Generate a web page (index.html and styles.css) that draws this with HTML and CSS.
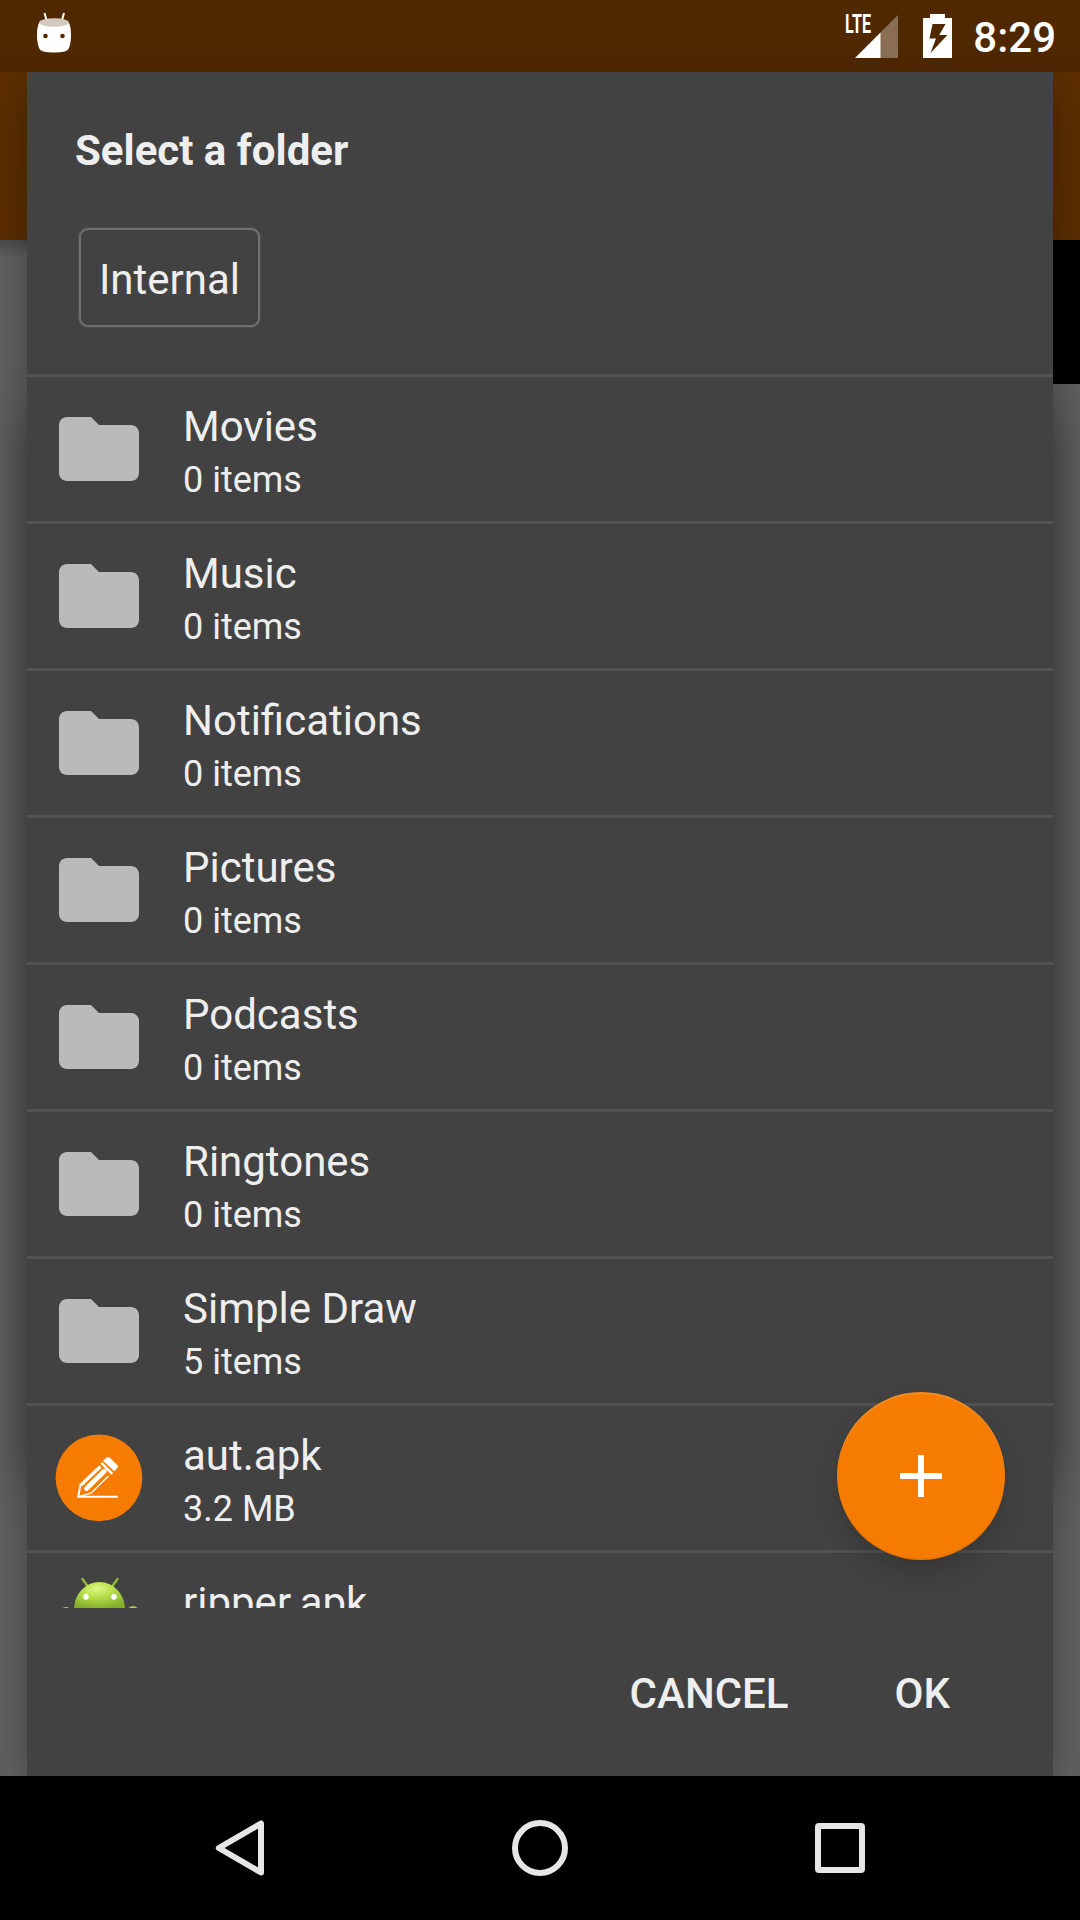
FILE: index.html
```html
<!DOCTYPE html>
<html lang="en">
<head>
<meta charset="utf-8">
<title>Select a folder</title>
<link rel="stylesheet" href="styles.css">
</head>
<body>
<svg width="0" height="0" class="defs">
  <symbol id="folder" viewBox="0 0 24 24"><path d="M10 4H4c-1.100 0-2 .9-2 2v12c0 1.100.9 2 2 2h16c1.100 0 2-.9 2-2V8c0-1.100-.9-2-2-2h-8z"/></symbol>
</svg>
<div class="screen">
  <header class="status">
    <svg class="robot" width="36" height="42" viewBox="0 0 36 42">
      <path d="M8.500 1l2.500 9M28 1l-2.500 9" stroke="#fff" stroke-width="2" fill="none"/>
      <path d="M3 11Q1 15 1 23t2 13q1 4.500 15 4.500t15-4.500q2-5 2-13t-2-12z" fill="#fff"/>
      <ellipse cx="18" cy="10.500" rx="15" ry="4.200" fill="#d3c9bf"/>
      <circle cx="9.500" cy="24" r="2.300" fill="#4f2800"/><circle cx="26.500" cy="24" r="2.300" fill="#4f2800"/>
    </svg>
    <div class="indicators">
      <div class="signal">
        <span class="lte">LTE</span>
        <svg width="43" height="43" viewBox="0 0 43 43"><path d="M43 0v43H25V18z" fill="#fff" opacity=".33"/><path d="M25.500 17.500V43H0z" fill="#fff"/></svg>
      </div>
      <svg class="battery" width="29" height="44" viewBox="0 0 29 44"><path fill="#fff" fill-rule="evenodd" d="M7 0h15v4h7v40H0V4h7zM9.500 10L6.500 24.500h6.500L7.500 39 24.500 21h-8.200L22.500 10z"/></svg>
      <span class="clock">8:29</span>
    </div>
  </header>
  <main class="backdrop">
    <section class="dialog">
      <h1 class="title">Select a folder</h1>
      <div class="crumbs"><span class="crumb">Internal</span></div>
      <div class="list-wrap">
        <ul class="list">
          <li><svg class="icon"><use href="#folder"/></svg><div class="text"><b>Movies</b><small>0 items</small></div></li>
          <li><svg class="icon"><use href="#folder"/></svg><div class="text"><b>Music</b><small>0 items</small></div></li>
          <li><svg class="icon"><use href="#folder"/></svg><div class="text"><b>Notifications</b><small>0 items</small></div></li>
          <li><svg class="icon"><use href="#folder"/></svg><div class="text"><b>Pictures</b><small>0 items</small></div></li>
          <li><svg class="icon"><use href="#folder"/></svg><div class="text"><b>Podcasts</b><small>0 items</small></div></li>
          <li><svg class="icon"><use href="#folder"/></svg><div class="text"><b>Ringtones</b><small>0 items</small></div></li>
          <li><svg class="icon"><use href="#folder"/></svg><div class="text"><b>Simple Draw</b><small>5 items</small></div></li>
          <li>
            <svg class="icon" viewBox="0 0 96 96">
              <circle cx="48" cy="47.800" r="43.400" fill="#f57c00"/>
              <path d="M55.800 27.500q1.500-1 3 .3l7.500 7.200q1.300 1.500.2 3L63.300 41.300 52 30.800z" fill="#fff"/>
              <g fill="none" stroke="#fff">
                <path d="M50.300 32.800L61.300 43.800" stroke-width="2.400"/>
                <path d="M49.500 36.500L30 55" stroke-width="3.200"/>
                <path d="M29.500 54L27.300 66.700" stroke-width="2"/>
                <path d="M53.200 41.300L35.500 58.500" stroke-width="5" stroke-linecap="round"/>
                <path d="M57.500 46L40 63.200 28 66.500" stroke-width="1.500"/>
                <path d="M26.300 66.800H66.800" stroke-width="2"/>
              </g>
            </svg>
            <div class="text"><b>aut.apk</b><small>3.2 MB</small></div>
          </li>
          <li>
            <svg class="icon" viewBox="0 0 96 96">
              <defs><radialGradient id="droid" cx=".45" cy=".25" r=".75"><stop offset="0" stop-color="#e0f986"/><stop offset=".4" stop-color="#b8df4b"/><stop offset="1" stop-color="#83ad2b"/></radialGradient></defs>
              <path d="M31.500 2l5 7M66.500 2l-5 7" stroke="#91b83a" stroke-width="2.500" stroke-linecap="round"/>
              <path d="M23 32a25.500 27 0 0 1 51 0z" fill="url(#droid)"/>
              <ellipse cx="35" cy="19.700" rx="2.700" ry="3" fill="#fff"/><ellipse cx="63" cy="19.700" rx="2.700" ry="3" fill="#fff"/>
              <circle cx="15" cy="36" r="6" fill="#a8cf3f"/><circle cx="82" cy="35" r="6" fill="#a8cf3f"/>
            </svg>
            <div class="text"><b>ripper.apk</b></div>
          </li>
        </ul>
        <button class="fab"><svg width="42" height="42" viewBox="0 0 42 42"><path d="M18 0h6v18h18v6H24v18h-6V24H0v-6h18z" fill="#fff"/></svg></button>
      </div>
      <div class="actions"><span>CANCEL</span><span>OK</span></div>
    </section>
  </main>
  <nav class="nav">
    <svg viewBox="0 0 60 60"><path d="M51 5.500v49L8.800 30z"/></svg>
    <svg viewBox="0 0 60 60"><circle cx="30" cy="30" r="25"/></svg>
    <svg viewBox="0 0 60 60"><rect x="8" y="8" width="44" height="44" rx="1"/></svg>
  </nav>
</div>
</body>
</html>
```
FILE: styles.css
```css
* { box-sizing: border-box; }
body { margin: 0; background: #000; font-family: Roboto, sans-serif; color: #eee; }
.defs { display: block; height: 0; }
.screen { width: 1080px; height: 1920px; display: flex; flex-direction: column; overflow: hidden; }
.status { height: 72px; flex: none; background: linear-gradient(#502800 45px, #4a2500); display: flex; justify-content: space-between; align-items: flex-start; padding: 12px 24px 0 36px; }
.indicators { display: flex; color: #fff; }
.signal { position: relative; width: 54px; padding: 3px 0 0 11px; margin-right: 25px; }
.signal svg { display: block; }
.lte { position: absolute; left: 1px; top: 0; font: 700 26px/25px Roboto, sans-serif; transform: scaleX(.62); transform-origin: 0 0; }
.battery { margin-top: 2px; }
.clock { font-size: 42px; font-weight: 500; line-height: 52px; margin-left: 21px; }
.backdrop {
  height: 1704px; flex: none; padding: 0 27px;
  background:
    linear-gradient(#000, #000) right 0 top 168px / 27px 144px no-repeat,
    linear-gradient(#5f3000, #5c2e00) 0 0 / 100% 168px no-repeat,
    linear-gradient(rgba(0,0,0,.22), transparent) 0 168px / 100% 18px no-repeat,
    #626262;
  overflow: hidden;
  isolation: isolate;
}
.dialog { position: relative; height: 100%; background: #424242; box-shadow: 0 10px 42px rgba(0,0,0,.34); display: flex; flex-direction: column; }
/* softer second shadow of the panel stacked beneath the dialog */
.dialog::before { content: ""; position: absolute; z-index: -1; inset: 345px 0 296px; box-shadow: 0 0 48px rgba(0,0,0,.34); }
.title { margin: 0; padding: 54px 48px 0; font-size: 42px; line-height: 50px; font-weight: 700; }
.crumbs { height: 198px; padding: 52px 52px 0; }
.crumb { display: inline-block; width: 181px; height: 99px; border: 2px solid #707070; border-radius: 9px; box-shadow: 0 0 2px #707070; font-size: 42px; line-height: 99px; text-align: center; }
.list-wrap { position: relative; height: 1234px; }
.list { list-style: none; margin: 0; padding: 0; height: 100%; overflow: hidden; }
.list li { height: 147px; border-top: 3px solid #525252; padding: 24px 0 0 24px; display: flex; align-items: flex-start; }
.icon { width: 96px; height: 96px; fill: #bababa; flex: none; }
.text { margin: -2px 0 0 36px; }
.text b { display: block; font-weight: 400; font-size: 42px; line-height: 56px; }
.text small { display: block; font-size: 36px; line-height: 50px; }
.fab { position: absolute; right: 48px; top: 1018px; width: 168px; height: 168px; border: 0; border-radius: 50%; padding: 0; background: #f57c00; display: grid; place-items: center; box-shadow: 0 14px 24px rgba(0,0,0,.17), inset 0 2px 1px rgba(255,255,255,.12), inset 0 -2px 1px rgba(0,0,0,.06); }
.actions { display: flex; justify-content: flex-end; gap: 106px; padding: 61px 103px 0 0; font-size: 42px; font-weight: 500; line-height: 50px; }
.nav { height: 144px; flex: none; background: #000; display: flex; justify-content: center; align-items: center; gap: 240px; }
.nav svg { width: 60px; height: 60px; fill: none; stroke: #e6e6e6; stroke-width: 6; stroke-linejoin: round; }
```
